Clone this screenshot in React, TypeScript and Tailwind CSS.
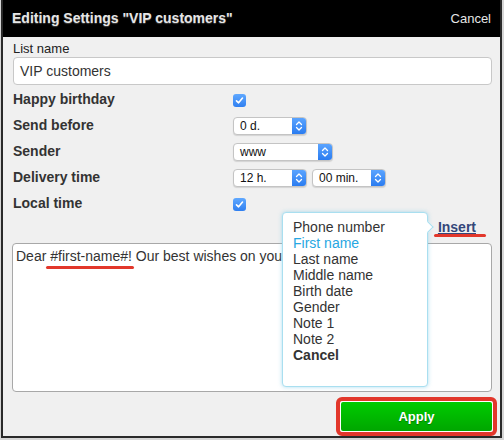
import React from "react";

function Checkbox() {
  return (
    <div className="w-[13px] h-[13px] rounded-[3px] bg-gradient-to-b from-[#5fa8ff] to-[#2f7ff0] flex items-center justify-center">
      <svg width="9" height="9" viewBox="0 0 9 9">
        <path d="M1.5 4.8 L3.6 6.8 L7.5 2" stroke="white" strokeWidth="1.6" fill="none" strokeLinecap="round" strokeLinejoin="round" />
      </svg>
    </div>
  );
}

function Select({ value, width }: { value: string; width: string }) {
  return (
    <div className={`${width} h-[18px] flex rounded-[4px] border border-[#c4c4c4] bg-white overflow-hidden shadow-[0_1px_1px_rgba(0,0,0,0.12)]`}>
      <div className="flex-1 pl-[6px] text-[12px] leading-[16px] text-[#111]">{value}</div>
      <div className="w-[14px] h-full bg-gradient-to-b from-[#5aa4ff] to-[#2a7cf0] flex items-center justify-center">
        <svg width="8" height="12" viewBox="0 0 8 12">
          <path d="M1.5 4.5 L4 2 L6.5 4.5 M1.5 7.5 L4 10 L6.5 7.5" stroke="white" strokeWidth="1.3" fill="none" strokeLinecap="round" strokeLinejoin="round" />
        </svg>
      </div>
    </div>
  );
}

function Row({ label, children }: { label: string; children: React.ReactNode }) {
  return (
    <div className="h-[26px] flex items-center">
      <div className="w-[220px] text-[14px] font-bold text-[#333] leading-[16px] -mt-[2px]">{label}</div>
      <div className="flex items-center gap-[5px]">{children}</div>
    </div>
  );
}

const fields = ["Phone number", "First name", "Last name", "Middle name", "Birth date", "Gender", "Note 1", "Note 2"];

export default function App() {
  return (
    <div className="w-[504px] h-[440px] bg-[#d6d6d6] overflow-hidden font-['Liberation_Sans',Arial,sans-serif]">
      <div className="relative ml-[1px] w-[501px] h-[438px] border-x-2 border-b-2 border-[#2a2a2a] bg-[#f0f0f0] flex flex-col">
        {/* Header */}
        <div className="h-[37px] bg-black flex items-center justify-between pl-[9px] pr-[9px]">
          <span className="text-[14px] font-bold text-[#e6e6e6] [text-shadow:0_1px_1px_rgba(255,255,255,0.25)]">
            Editing Settings "VIP customers"
          </span>
          <span className="text-[13px] text-[#e6e6e6]">Cancel</span>
        </div>

        {/* Body */}
        <div className="flex flex-col pl-[10px] pr-[8px]">
          <div className="mt-[4px] h-[16px] text-[13px] leading-[16px] text-[#222]">List name</div>
          <div className="h-[28px] rounded-[4px] border border-[#c8c8c8] bg-white flex items-center pl-[6px] text-[14px] text-[#333]">
            VIP customers
          </div>

          <div className="mt-[2px] flex flex-col">
            <Row label="Happy birthday">
              <Checkbox />
            </Row>
            <Row label="Send before">
              <Select value="0 d." width="w-[74px]" />
            </Row>
            <Row label="Sender">
              <Select value="www" width="w-[100px]" />
            </Row>
            <Row label="Delivery time">
              <Select value="12 h." width="w-[74px]" />
              <Select value="00 min." width="w-[74px]" />
            </Row>
            <Row label="Local time">
              <Checkbox />
            </Row>
          </div>

          {/* Insert link */}
          <div className="relative h-[26px] flex items-center justify-end pr-[16px]">
            <span className="text-[14px] font-bold text-[#34477a] underline leading-[16px] -mt-[6px]">Insert</span>
            <div className="absolute left-[421px] top-[17px] w-[52px] h-[3px] rounded-full bg-[#e2372b]" />
          </div>

          {/* Textarea */}
          <div className="relative -ml-[1px] h-[149px] rounded-[4px] border border-[#a8a8a8] bg-white pl-[3px] pt-[4px]">
            <div className="w-[266px] overflow-hidden whitespace-nowrap text-[14px] leading-[16px] text-[#333]">
              Dear #first-name#! Our best wishes on your birthday
            </div>
            <div className="absolute left-[33px] top-[22px] w-[88px] h-[3px] rounded-full bg-[#e2372b]" />
          </div>

          {/* Apply */}
          <div className="flex justify-end mt-[5px] -mr-[5px]">
            <div className="rounded-[6px] border-[4px] border-[#e2372b]">
              <button className="w-[153px] h-[31px] rounded-[3px] border border-white bg-gradient-to-b from-[#00cc00] to-[#00a600] text-white text-[13px] font-bold [text-shadow:0_1px_1px_rgba(0,0,0,0.3)]">
                Apply
              </button>
            </div>
          </div>
        </div>

        {/* Popup menu */}
        <div className="absolute left-[279px] top-[212px] w-[146px] h-[175px] rounded-[4px] border border-[#a9dff0] bg-white shadow-[0_0_4px_rgba(120,200,230,0.6)] pt-[6px] pl-[10px]">
          {fields.map((f, i) => (
            <div key={f} className={`text-[14px] leading-[16px] ${i === 1 ? "text-[#27a7e2]" : "text-[#333]"}`}>
              {f}
            </div>
          ))}
          <div className="text-[14px] leading-[16px] font-bold text-[#333]">Cancel</div>
          <div className="absolute -right-[5px] top-[10px] w-[8px] h-[8px] rotate-45 bg-white border-t border-r border-[#a9dff0]" />
        </div>
      </div>
    </div>
  );
}
